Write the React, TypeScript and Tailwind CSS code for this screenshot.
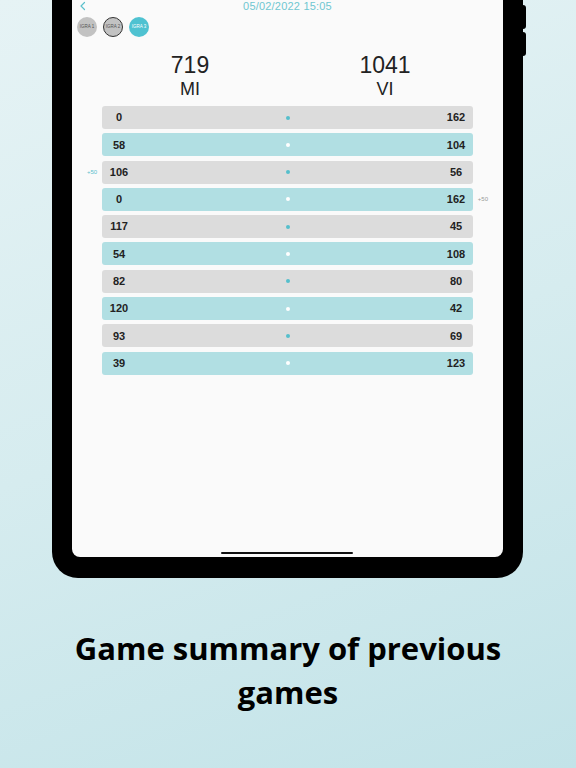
const rows: { l: number; r: number; teal: boolean; lb?: string; rb?: string }[] = [
  { l: 0, r: 162, teal: false },
  { l: 58, r: 104, teal: true },
  { l: 106, r: 56, teal: false, lb: "+50" },
  { l: 0, r: 162, teal: true, rb: "+50" },
  { l: 117, r: 45, teal: false },
  { l: 54, r: 108, teal: true },
  { l: 82, r: 80, teal: false },
  { l: 120, r: 42, teal: true },
  { l: 93, r: 69, teal: false },
  { l: 39, r: 123, teal: true },
];

export default function App() {
  return (
    <div className="flex h-[768px] w-[576px] flex-col items-center overflow-hidden bg-[linear-gradient(160deg,#e6f3f5_0%,#d6ecef_50%,#c2e3e8_100%)] font-['Liberation_Sans',sans-serif]">
      <div className="relative ml-[-1px] h-[578px] w-[471px] shrink-0 rounded-b-[26px] bg-black px-[20px] pb-[21px]">
        <div className="absolute right-[-3px] top-[5px] h-[24px] w-[3px] rounded-r-sm bg-black" />
        <div className="absolute right-[-3px] top-[32px] h-[24px] w-[3px] rounded-r-sm bg-black" />
        <div className="relative flex h-full flex-col rounded-b-[8px] bg-[#fafafa]">
          <div className="relative h-[14px]">
            <svg viewBox="0 0 10 10" className="absolute left-[6px] top-[1px] h-[10px] w-[10px] text-[#5cc0cc]" fill="none" stroke="currentColor">
              <path d="M6.5 1.5L3 5l3.5 3.5" strokeWidth={1.2} strokeLinecap="round" strokeLinejoin="round" />
            </svg>
            <p className="absolute left-0 right-0 top-[-1px] text-center text-[11px] leading-[14px] tracking-[0.2px] text-[#6fc7d1]">05/02/2022 15:05</p>
          </div>
          <div className="ml-[5px] mt-[3px] flex gap-[6px]">
            <div className="flex h-[20px] w-[20px] items-center justify-center rounded-full bg-[#c2c2c2] text-[4.5px] text-[#555]">IGRA 1</div>
            <div className="flex h-[20px] w-[20px] items-center justify-center rounded-full border border-[#333] bg-[#c2c2c2] text-[4.5px] text-[#555]">IGRA 2</div>
            <div className="flex h-[20px] w-[20px] items-center justify-center rounded-full bg-[#4fc2d1] text-[4.5px] text-white">IGRA 3</div>
          </div>
          <div className="mt-[15px] flex text-[#222]">
            <div className="flex w-[236px] flex-col items-center">
              <span className="text-[23px] leading-[26px]">719</span>
              <span className="text-[18px] leading-[22px]">MI</span>
            </div>
            <div className="flex w-[154px] flex-col items-center">
              <span className="text-[23px] leading-[26px]">1041</span>
              <span className="text-[18px] leading-[22px]">VI</span>
            </div>
          </div>
          <div className="mt-[6px] flex flex-col gap-[4.3px] pl-[30px]">
            {rows.map((row, i) => (
              <div key={i} className="relative w-[371px]">
                {row.lb && <span className="absolute left-[-15px] top-[7px] text-[6px] text-[#5cc0cc]">{row.lb}</span>}
                {row.rb && <span className="absolute right-[-15px] top-[7px] text-[6px] text-[#999]">{row.rb}</span>}
                <div className={`flex h-[23px] items-center justify-between rounded-[3px] px-[5px] text-[11px] font-bold text-[#222] ${row.teal ? "bg-[#b1dfe3]" : "bg-[#dcdcdc]"}`}>
                  <span className="w-[24px] text-center">{row.l}</span>
                  <span className={`h-[4px] w-[4px] rounded-full ${row.teal ? "bg-white" : "bg-[#55bfcc]"}`} />
                  <span className="w-[24px] text-center">{row.r}</span>
                </div>
              </div>
            ))}
          </div>
          <div className="absolute bottom-[3px] left-[149px] h-[2.5px] w-[132px] rounded-full bg-[#111]" />
        </div>
      </div>
      <h1 className="mt-[48px] w-[500px] text-center font-['Open_Sans',sans-serif] text-[31px] font-bold leading-[44px] text-black">
        Game summary of previous games
      </h1>
    </div>
  );
}
